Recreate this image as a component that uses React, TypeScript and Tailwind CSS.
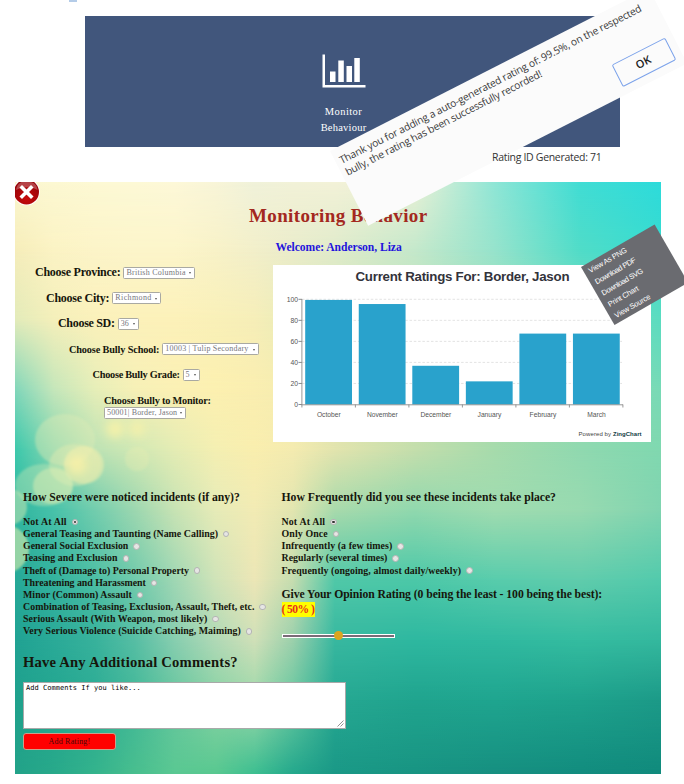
import { useLayoutEffect, useRef, useState } from "react";
import type { ReactNode } from "react";

/** Single line of text whose letter spacing is adjusted so that it fills `w` pixels. */
function Fit({ w, className = "", children }: { w: number; className?: string; children: string }) {
  const ref = useRef<HTMLSpanElement>(null);
  const [spacing, setSpacing] = useState(0);
  useLayoutEffect(() => {
    if (ref.current) setSpacing((w - ref.current.offsetWidth) / children.length);
  }, []);
  return (
    <span ref={ref} className={`inline-block shrink-0 whitespace-nowrap ${className}`} style={{ letterSpacing: spacing }}>
      {children}
    </span>
  );
}

const STOPS = [0, 6, 12.4, 18.5, 24.8, 31, 37.1, 43, 49.5, 61.9, 74.3, 87.5, 100];
const MESH: { y: number; c: string[] }[] = [
  { y: 0, c: ["#fbf7d0", "#fcf8d2", "#fdf9d4", "#fdf9d6", "#fdf8d8", "#f8f5d8", "#f0f2da", "#f2f2d8", "#f3f2d8", "#eaf1d6", "#8ee6d6", "#40ddd4", "#2ddbdb"] },
  { y: 68, c: ["#f6edba", "#fbf3c4", "#fcf4c8", "#fcf5ca", "#fcf5ca", "#f8f2c8", "#f2efca", "#eaeccb", "#e0ebcb", "#c4e8cb", "#96e3cc", "#50dcc8", "#38dccf"] },
  { y: 138, c: ["#e2ebba", "#f4efba", "#fbf1bb", "#fcf1ba", "#fcf1b9", "#f9f0b8", "#f6eeb8", "#e8ecb8", "#d8e8b8", "#c4e4b8", "#a4e0b8", "#80dcbc", "#5bdcc0"] },
  { y: 208, c: ["#80d6ba", "#c4e6ba", "#e6eeb8", "#f6f0b6", "#fbf0b4", "#fcf0b0", "#faeeb0", "#f4ecb0", "#e0e6b0", "#c8e0ac", "#a8dcac", "#90dab0", "#78dab6"] },
  { y: 268, c: ["#3cc8ac", "#86d6b0", "#bce2b4", "#d0e8b4", "#e4ecb4", "#f4efb2", "#f9eeae", "#f4ebb0", "#e2e4ae", "#c4deac", "#a6dbac", "#90d9b0", "#80d8b0"] },
  { y: 328, c: ["#2fb6a0", "#48c2aa", "#72cdae", "#9cd7b0", "#c8e3b4", "#e6ebb8", "#f2ebb4", "#e2e5b0", "#a8daac", "#90d8ae", "#a0dcb0", "#98dab0", "#80d4b0"] },
  { y: 398, c: ["#26a897", "#34b29e", "#4cbea4", "#70caac", "#a0d7b4", "#cfe3b8", "#ece6b6", "#c6ddb0", "#50c8a8", "#4cc8a8", "#58ccac", "#60ccac", "#52caac"] },
  { y: 458, c: ["#20a293", "#2aaa98", "#38b29c", "#56bea4", "#88ceb0", "#b0d9b6", "#d0e0b8", "#9cd0ac", "#38b8a0", "#2eb8a0", "#30b9a0", "#34bca0", "#34b89e"] },
  { y: 518, c: ["#1fa18c", "#23a68f", "#2cac94", "#42b898", "#66c69e", "#88d2a4", "#9cd8aa", "#68c8a0", "#26a892", "#20a48e", "#1fa58f", "#1ea28c", "#1c9a88"] },
  { y: 592, c: ["#22a288", "#28a98a", "#34b38c", "#48be8e", "#5ac892", "#58c890", "#3cbe90", "#24a88c", "#1a9886", "#189482", "#168f80", "#128c7e", "#108a7c"] },
];

function Backdrop() {
  return (
    <svg className="absolute inset-0 h-full w-full" viewBox="0 0 646 592" preserveAspectRatio="none">
      <defs>
        {MESH.map((row, i) => (
          <linearGradient key={i} id={`row${i}`}>
            {row.c.map((c, j) => (
              <stop key={j} offset={`${STOPS[j]}%`} stopColor={c} />
            ))}
          </linearGradient>
        ))}
        <linearGradient id="fade" x2="0" y2="1">
          <stop offset="0" stopColor="#fff" stopOpacity="0" />
          <stop offset="1" stopColor="#fff" />
        </linearGradient>
        {MESH.slice(1).map((row, i) => (
          <mask key={i} id={`mask${i + 1}`} maskUnits="userSpaceOnUse" x="0" y="0" width="646" height="592" style={{ maskType: "alpha" }}>
            <rect x="0" y={MESH[i].y} width="646" height={row.y - MESH[i].y} fill="url(#fade)" />
            <rect x="0" y={row.y} width="646" height={592 - row.y} fill="#fff" />
          </mask>
        ))}
        <filter id="soft"><feGaussianBlur stdDeviation="1.2" /></filter>
        <filter id="softer"><feGaussianBlur stdDeviation="5" /></filter>
      </defs>
      {MESH.map((_, i) => (
        <rect key={i} width="646" height="592" fill={`url(#row${i})`} mask={i ? `url(#mask${i})` : undefined} />
      ))}
      <g filter="url(#soft)">
        <ellipse cx="50" cy="258" rx="30" ry="26" fill="#e0ecb4" opacity=".4" />
        <ellipse cx="60" cy="283" rx="26" ry="21" fill="#e8eeb2" opacity=".4" />
        <ellipse cx="69" cy="283" rx="20" ry="19" fill="#f6efae" opacity=".5" />
        <ellipse cx="29" cy="303" rx="29" ry="21" fill="#c8e8b4" opacity=".4" />
        <ellipse cx="38" cy="304" rx="20" ry="18" fill="#e6efb4" opacity=".45" />
        <circle cx="-6" cy="325" r="18" fill="#d4ecb4" opacity=".5" />
        <circle cx="-10" cy="367" r="24" fill="#dcecac" opacity=".6" />
        <circle cx="122" cy="277" r="12" fill="#f4f0b0" opacity=".25" />
      </g>
      <g filter="url(#softer)">
        <circle cx="100" cy="247" r="9" fill="#fbf2a8" opacity=".8" />
        <circle cx="122" cy="247" r="8" fill="#fbf2a8" opacity=".7" />
        <circle cx="62" cy="283" r="10" fill="#fbf1a8" opacity=".8" />
      </g>
    </svg>
  );
}

const BARS: [string, number][] = [
  ["October", 99.4],
  ["November", 95.5],
  ["December", 36.8],
  ["January", 22],
  ["February", 67.4],
  ["March", 67.4],
];

function RatingsChart() {
  const base = 139.5;
  return (
    <svg className="block h-[177px] w-[378px] shrink-0 bg-white" viewBox="0 0 378 177" fontFamily="'Liberation Sans', Arial, sans-serif">
      <text x="82.5" y="16" fontSize="13.3" fontWeight="bold" fill="#33333b" textLength="214">
        Current Ratings For: Border, Jason
      </text>
      {[0, 20, 40, 60, 80, 100].map((v) => {
        const y = base - v * 1.052;
        return (
          <g key={v}>
            {v > 0 && <line x1="29" x2="349" y1={y} y2={y} stroke="#dcdcdc" strokeWidth=".8" strokeDasharray="2.5 1.8" />}
            <line x1="25.5" x2="29" y1={y} y2={y} stroke="#8c8c8c" />
            <text x="25" y={y + 2.4} fontSize="6.8" fill="#555" textAnchor="end">{v}</text>
          </g>
        );
      })}
      {BARS.map(([m, v], i) => (
        <g key={m}>
          <rect x={32.2 + i * 53.55} y={base - v * 1.052} width="46.8" height={v * 1.052} fill="#29a2cc" />
          <text x={55.8 + i * 53.55} y="151.5" fontSize="6.7" fill="#555" textAnchor="middle">{m}</text>
        </g>
      ))}
      <path d="M28.9 34v105.8" stroke="#8c8c8c" strokeWidth=".9" />
      <path d={`M28.5 139.8H350${[0, 1, 2, 3, 4, 5, 6].map((i) => `M${28.9 + i * 53.5} 139.5v3`).join("")}`} stroke="#8c8c8c" strokeWidth=".9" fill="none" />
      <text x="305.5" y="170.6" fontSize="6" fill="#444" textLength="32.5">Powered by</text>
      <text x="340" y="170.6" fontSize="6" fontWeight="bold" fill="#123c44" textLength="28.5">ZingChart</text>
    </svg>
  );
}

function Picker({ w, tw, children }: { w: string; tw: number; children: string }) {
  return (
    <span className={`flex h-[12px] shrink-0 items-center justify-between rounded-[1.5px] border border-[#a9a9a2] bg-white pl-[2px] pr-[3px] font-normal ${w}`}>
      <Fit w={tw} className="text-[8px] leading-[10px] text-[#77777c]">{children}</Fit>
      <span className="mt-px border-x-[1.5px] border-t-[2px] border-x-transparent border-t-[#555]" />
    </span>
  );
}

function Field({ indent, label, lw, size, children }: { indent: string; label: string; lw: number; size: string; children?: ReactNode }) {
  return (
    <div className={`flex h-[15px] items-center gap-[3px] ${indent}`}>
      <Fit w={lw} className={`font-bold leading-[15px] ${size}`}>{label}</Fit>
      {children}
    </div>
  );
}

function Option({ w, on, children }: { w: number; on?: boolean; children: string }) {
  return (
    <li className="flex h-[12.15px] items-center gap-[5px]">
      <Fit w={w} className="text-[9.9px] font-bold leading-[12px]">{children}</Fit>
      <span className="flex size-[6.5px] items-center justify-center rounded-full border border-[#b4b4b4] bg-[#e6e6e4]">
        {on && <span className="size-[2.5px] rounded-full bg-[#333]" />}
      </span>
    </li>
  );
}

const SEVERITY: [string, number][] = [
  ["Not At All", 43.5],
  ["General Teasing and Taunting (Name Calling)", 195],
  ["General Social Exclusion", 105],
  ["Teasing and Exclusion", 94.5],
  ["Theft of (Damage to) Personal Property", 165.5],
  ["Threatening and Harassment", 123],
  ["Minor (Common) Assault", 109],
  ["Combination of Teasing, Exclusion, Assault, Theft, etc.", 231],
  ["Serious Assault (With Weapon, most likely)", 184],
  ["Very Serious Violence (Suicide Catching, Maiming)", 218],
];

const FREQUENCY: [string, number][] = [
  ["Not At All", 43.5],
  ["Only Once", 46],
  ["Infrequently (a few times)", 110.5],
  ["Regularly (several times)", 105.5],
  ["Frequently (ongoing, almost daily/weekly)", 179.5],
];

function Banner() {
  return (
    <section className="ml-[85px] mt-[14px] flex h-[131px] w-[535px] flex-col items-center bg-[#41567c] pr-[18px] pt-[38px] font-['Liberation_Serif',serif] text-white">
      <svg className="h-[34px] w-[44px] shrink-0" viewBox="0 0 44 34" fill="#fff">
        <path d="M.5 .5H3V31H43.500V33.500H.5Z" />
        <path d="M8 17.500h5.500V28H8ZM16.300 6.500h5.500V28h-5.500ZM24.500 12H30V28h-5.500ZM32.300 4h5.500V28h-5.500Z" />
      </svg>
      <Fit w={37} className="mt-[16px] text-[10.5px] leading-[16px]">Monitor</Fit>
      <Fit w={46} className="text-[10.5px] leading-[16px]">Behaviour</Fit>
    </section>
  );
}

function CloseButton() {
  return (
    <svg className="absolute left-0 top-0 h-[24px] w-[26px]" viewBox="0 0 26 24">
      <defs>
        <radialGradient id="red" cx=".5" cy=".75" r=".7">
          <stop offset="0" stopColor="#c80a0a" />
          <stop offset="1" stopColor="#94040a" />
        </radialGradient>
      </defs>
      <circle cx="11.500" cy="10" r="13.300" fill="#fff" />
      <circle cx="11.500" cy="10" r="12.500" fill="url(#red)" />
      <path d="M1 8C2 2 6 0 7 0H16C20 1 22 4 22.500 8C15 4 8 5 1 8Z" fill="#fff" opacity=".25" />
      <path d="M7 5.500L16 14.500M16 5.500L7 14.500" stroke="#fff" strokeWidth="3.600" strokeLinecap="square" />
    </svg>
  );
}

function AlertDialog() {
  return (
    <div className="absolute left-[330px] top-[150.5px] h-[84px] w-[358px] origin-top-left -rotate-27 bg-[#fbfbfb] pl-[4.5px] pt-[7px] font-['Open_Sans','Noto_Sans',sans-serif] text-[#3a3a3a]">
      <div className="flex flex-col items-start text-[10.3px] leading-[13px]">
        <Fit w={337}>Thank you for adding a auto-generated rating of: 99.5%, on the respected</Fit>
        <Fit w={219}>bully, the rating has been successfully recorded!</Fit>
      </div>
      <div className="ml-[285px] mt-[17.5px] flex h-[25px] w-[60px] items-center justify-center rounded-[2px] border-[1.5px] border-[#7ba2ea] text-[11px] font-semibold text-[#222]">OK</div>
    </div>
  );
}

function ChartMenu() {
  return (
    <ul className="absolute left-[581px] top-[267px] flex h-[67px] w-[85px] origin-top-left -rotate-30 flex-col items-start bg-[#6a6b70] pl-[5px] pt-[1px] font-['Liberation_Sans',Arial,sans-serif] text-[7.5px] leading-[13.1px] text-white">
      <li className="flex"><Fit w={43}>View As PNG</Fit></li>
      <li className="flex"><Fit w={45}>Download PDF</Fit></li>
      <li className="flex"><Fit w={46}>Download SVG</Fit></li>
      <li className="flex"><Fit w={34}>Print Chart</Fit></li>
      <li className="flex"><Fit w={40}>View Source</Fit></li>
    </ul>
  );
}

export default function App() {
  return (
    <div className="relative flex h-[784px] w-[684px] flex-col overflow-hidden bg-white">
      <div className="ml-[69px] h-[2px] w-[8px] shrink-0 bg-[#b4cce8]" />
      <Banner />
      <div className="relative z-10 ml-[492px] flex h-[35px] items-start pt-[2px] font-['Open_Sans','Noto_Sans',sans-serif] text-[10.5px] leading-[16px] text-[#333]">
        <Fit w={109}>Rating ID Generated: 71</Fit>
      </div>

      <main className="relative isolate ml-[15px] h-[592px] w-[646px] overflow-hidden font-['Liberation_Serif',serif] text-[#16160c]">
        <Backdrop />
        <CloseButton />
        <div className="relative flex flex-col">
          <h1 className="ml-[234px] mt-[22px] flex h-[24px] font-bold text-[#a32820]">
            <Fit w={179} className="text-[19px] leading-[24px]">Monitoring Behavior</Fit>
          </h1>
          <p className="ml-[260.5px] mt-[12px] flex h-[15px] font-bold text-[#1f14dc]">
            <Fit w={126} className="text-[11.6px] leading-[16px]">Welcome: Anderson, Liza</Fit>
          </p>

          <div className="mt-[10px] flex">
            <div className="flex w-[258px] shrink-0 flex-col gap-[10.5px]">
              <Field indent="pl-[20px]" label="Choose Province:" lw={85} size="text-[12px]"><Picker w="w-[72px]" tw={59}>British Columbia</Picker></Field>
              <Field indent="pl-[31px]" label="Choose City:" lw={63} size="text-[12px]"><Picker w="w-[49px]" tw={36}>Richmond</Picker></Field>
              <Field indent="pl-[43px]" label="Choose SD:" lw={57} size="text-[12px]"><Picker w="w-[21px]" tw={8}>36</Picker></Field>
              <Field indent="pl-[54px]" label="Choose Bully School:" lw={90} size="text-[10.3px]"><Picker w="w-[97px]" tw={83}>10003 | Tulip Secondary</Picker></Field>
              <Field indent="pl-[77.5px]" label="Choose Bully Grade:" lw={87} size="text-[10.3px]"><Picker w="w-[17px]" tw={4}>5</Picker></Field>
              <div className="flex flex-col">
                <Field indent="pl-[89px]" label="Choose Bully to Monitor:" lw={107} size="text-[10.3px]" />
                <div className="-mt-px ml-[89px] flex"><Picker w="w-[82px]" tw={70}>50001| Border, Jason</Picker></div>
              </div>
            </div>
            <RatingsChart />
          </div>

          <div className="mt-[47px] flex pl-[8px]">
            <section className="w-[258.5px] shrink-0">
              <h2 className="flex h-[27px] font-bold"><Fit w={217} className="text-[11.7px] leading-[17px]">How Severe were noticed incidents (if any)?</Fit></h2>
              <ul>{SEVERITY.map(([t, w], i) => <Option key={t} w={w} on={i === 0}>{t}</Option>)}</ul>
            </section>
            <section className="flex flex-col">
              <h2 className="flex h-[27px] font-bold"><Fit w={274} className="text-[11.7px] leading-[17px]">How Frequently did you see these incidents take place?</Fit></h2>
              <ul>{FREQUENCY.map(([t, w], i) => <Option key={t} w={w} on={i === 0}>{t}</Option>)}</ul>
              <Fit w={321} className="mt-[10px] text-[11.7px] font-bold leading-[16px]">Give Your Opinion Rating (0 being the least - 100 being the best):</Fit>
              <div className="-mt-px flex h-[15px] w-[33.5px] items-center bg-[#ffff00] font-bold text-[#e8301c]"><Fit w={33} className="text-[11.6px] leading-[15px]">( 50% )</Fit></div>
              <div className="mt-[15px] flex h-[8px] w-[113px] items-center justify-center border-y-[2px] border-transparent">
                <div className="flex h-[4px] w-full shrink-0 items-center justify-center border border-white bg-[#7b6b78]">
                  <span className="size-[9px] shrink-0 rounded-full bg-[#daa520]" />
                </div>
              </div>
            </section>
          </div>

          <div className="flex flex-col items-start pl-[8px]">
            <h2 className="mt-[12px] flex h-[30.5px] font-bold"><Fit w={215} className="text-[14.6px] leading-[20px]">Have Any Additional Comments?</Fit></h2>
            <div className="relative h-[47px] w-[323px] border border-[#a9a9a9] bg-white pl-[2px] pt-px font-['DejaVu_Sans_Mono',monospace] text-[7px] leading-[9px] text-black">
              <Fit w={115}>Add Comments If you like...</Fit>
              <svg className="absolute bottom-px right-px size-[7px]" viewBox="0 0 7 7" stroke="#777" strokeWidth=".8"><path d="M.5 6.500L6.500.5M3.500 6.500L6.500 3.500" /></svg>
            </div>
            <div className="mt-[4px] flex h-[17px] w-[93px] items-center justify-center rounded-[3px] border border-[#c9a08c] bg-[#ff0000]">
              <Fit w={42} className="text-[8px] leading-[10px] text-[#4a0808]">Add Rating!</Fit>
            </div>
          </div>
        </div>
      </main>

      <AlertDialog />
      <ChartMenu />
    </div>
  );
}
